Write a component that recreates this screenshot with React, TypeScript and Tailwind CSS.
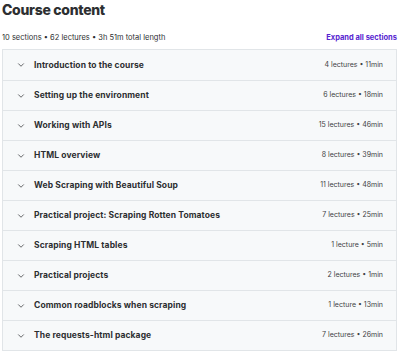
import { ChevronDown } from 'lucide-react';

const sections = [
  { title: 'Introduction to the course', meta: '4 lectures • 11min' },
  { title: 'Setting up the environment', meta: '6 lectures • 18min' },
  { title: 'Working with APIs', meta: '15 lectures • 46min' },
  { title: 'HTML overview', meta: '8 lectures • 39min' },
  { title: 'Web Scraping with Beautiful Soup', meta: '11 lectures • 48min' },
  { title: 'Practical project: Scraping Rotten Tomatoes', meta: '7 lectures • 25min' },
  { title: 'Scraping HTML tables', meta: '1 lecture • 5min' },
  { title: 'Practical projects', meta: '2 lectures • 1min' },
  { title: 'Common roadblocks when scraping', meta: '1 lecture • 13min' },
  { title: 'The requests-html package', meta: '7 lectures • 26min' },
];

export default function App() {
  return (
    <div className="w-[400px] h-[354px] bg-white px-[2px] text-[#2d2f31] font-['Inter',sans-serif]">
      <h2 className="text-[14px] font-extrabold leading-[18px] tracking-[-0.3px] pt-[1px]">Course content</h2>
      <div className="mt-[14px] flex items-end justify-between pr-[1px]">
        <span className="text-[7.5px] leading-[10px] text-[#2d2f31]">
          10 sections • 62 lectures • 3h 51m total length
        </span>
        <button className="text-[7.5px] font-bold leading-[10px] text-[#5624d0]">Expand all sections</button>
      </div>
      <div className="mt-[6px] border border-[#e1e5e8] mr-[1px]">
        {sections.map((s, i) => (
          <div
            key={i}
            className={`flex h-[30px] items-center bg-[#f7f9fa] pl-[13px] pr-[13px] ${i > 0 ? 'border-t border-[#e1e5e8]' : ''}`}
          >
            <ChevronDown className="h-[10px] w-[10px] text-[#2d2f31]" strokeWidth={1.75} />
            <span className="ml-[8px] flex-1 text-[8.5px] font-bold tracking-[0.1px]">{s.title}</span>
            <span className="text-[7px] text-[#3e4143]">{s.meta}</span>
          </div>
        ))}
      </div>
    </div>
  );
}
